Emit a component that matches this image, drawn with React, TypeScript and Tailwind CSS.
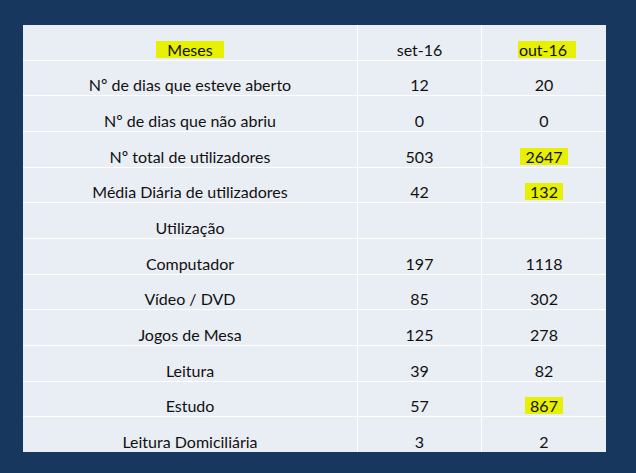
const rows: { label: string; a: string; b: string; hl?: boolean }[] = [
  { label: "Nº de dias que esteve aberto", a: "12", b: "20" },
  { label: "Nº de dias que não abriu", a: "0", b: "0" },
  { label: "Nº total de utilizadores", a: "503", b: "2647", hl: true },
  { label: "Média Diária de utilizadores", a: "42", b: "132", hl: true },
  { label: "Utilização", a: "", b: "" },
  { label: "Computador", a: "197", b: "1118" },
  { label: "Vídeo / DVD", a: "85", b: "302" },
  { label: "Jogos de Mesa", a: "125", b: "278" },
  { label: "Leitura", a: "39", b: "82" },
  { label: "Estudo", a: "57", b: "867", hl: true },
  { label: "Leitura Domiciliária", a: "3", b: "2" },
];

function Cell({ children }: { children?: React.ReactNode }) {
  return (
    <div className="bg-[#e9edf4] flex items-end justify-center pb-[2px] leading-[17px]">
      {children}
    </div>
  );
}

function Mark({ children, className = "" }: { children: React.ReactNode; className?: string }) {
  return (
    <span className={`inline-block bg-[#e6f000] h-[17px] leading-[17px] ${className}`}>
      {children}
    </span>
  );
}

export default function App() {
  return (
    <div className="w-[636px] h-[473px] bg-[#18375e] pt-[25px] pl-[23px] font-['Lato',sans-serif] text-[16px] text-[#111]">
      <div className="grid grid-cols-[334px_123px_124px] grid-rows-[repeat(12,1fr)] gap-px bg-white w-[583px] h-[427px]">
        <Cell>
          <Mark className="px-[11px]">Meses</Mark>
        </Cell>
        <Cell>set-16</Cell>
        <Cell>
          <Mark className="pl-px pr-[9px] ml-[6px]">out-16</Mark>
        </Cell>
        {rows.map((r) => (
          <div key={r.label} className="contents">
            <Cell>{r.label}</Cell>
            <Cell>{r.a}</Cell>
            <Cell>{r.hl ? <Mark className="px-[5px]">{r.b}</Mark> : r.b}</Cell>
          </div>
        ))}
      </div>
    </div>
  );
}
